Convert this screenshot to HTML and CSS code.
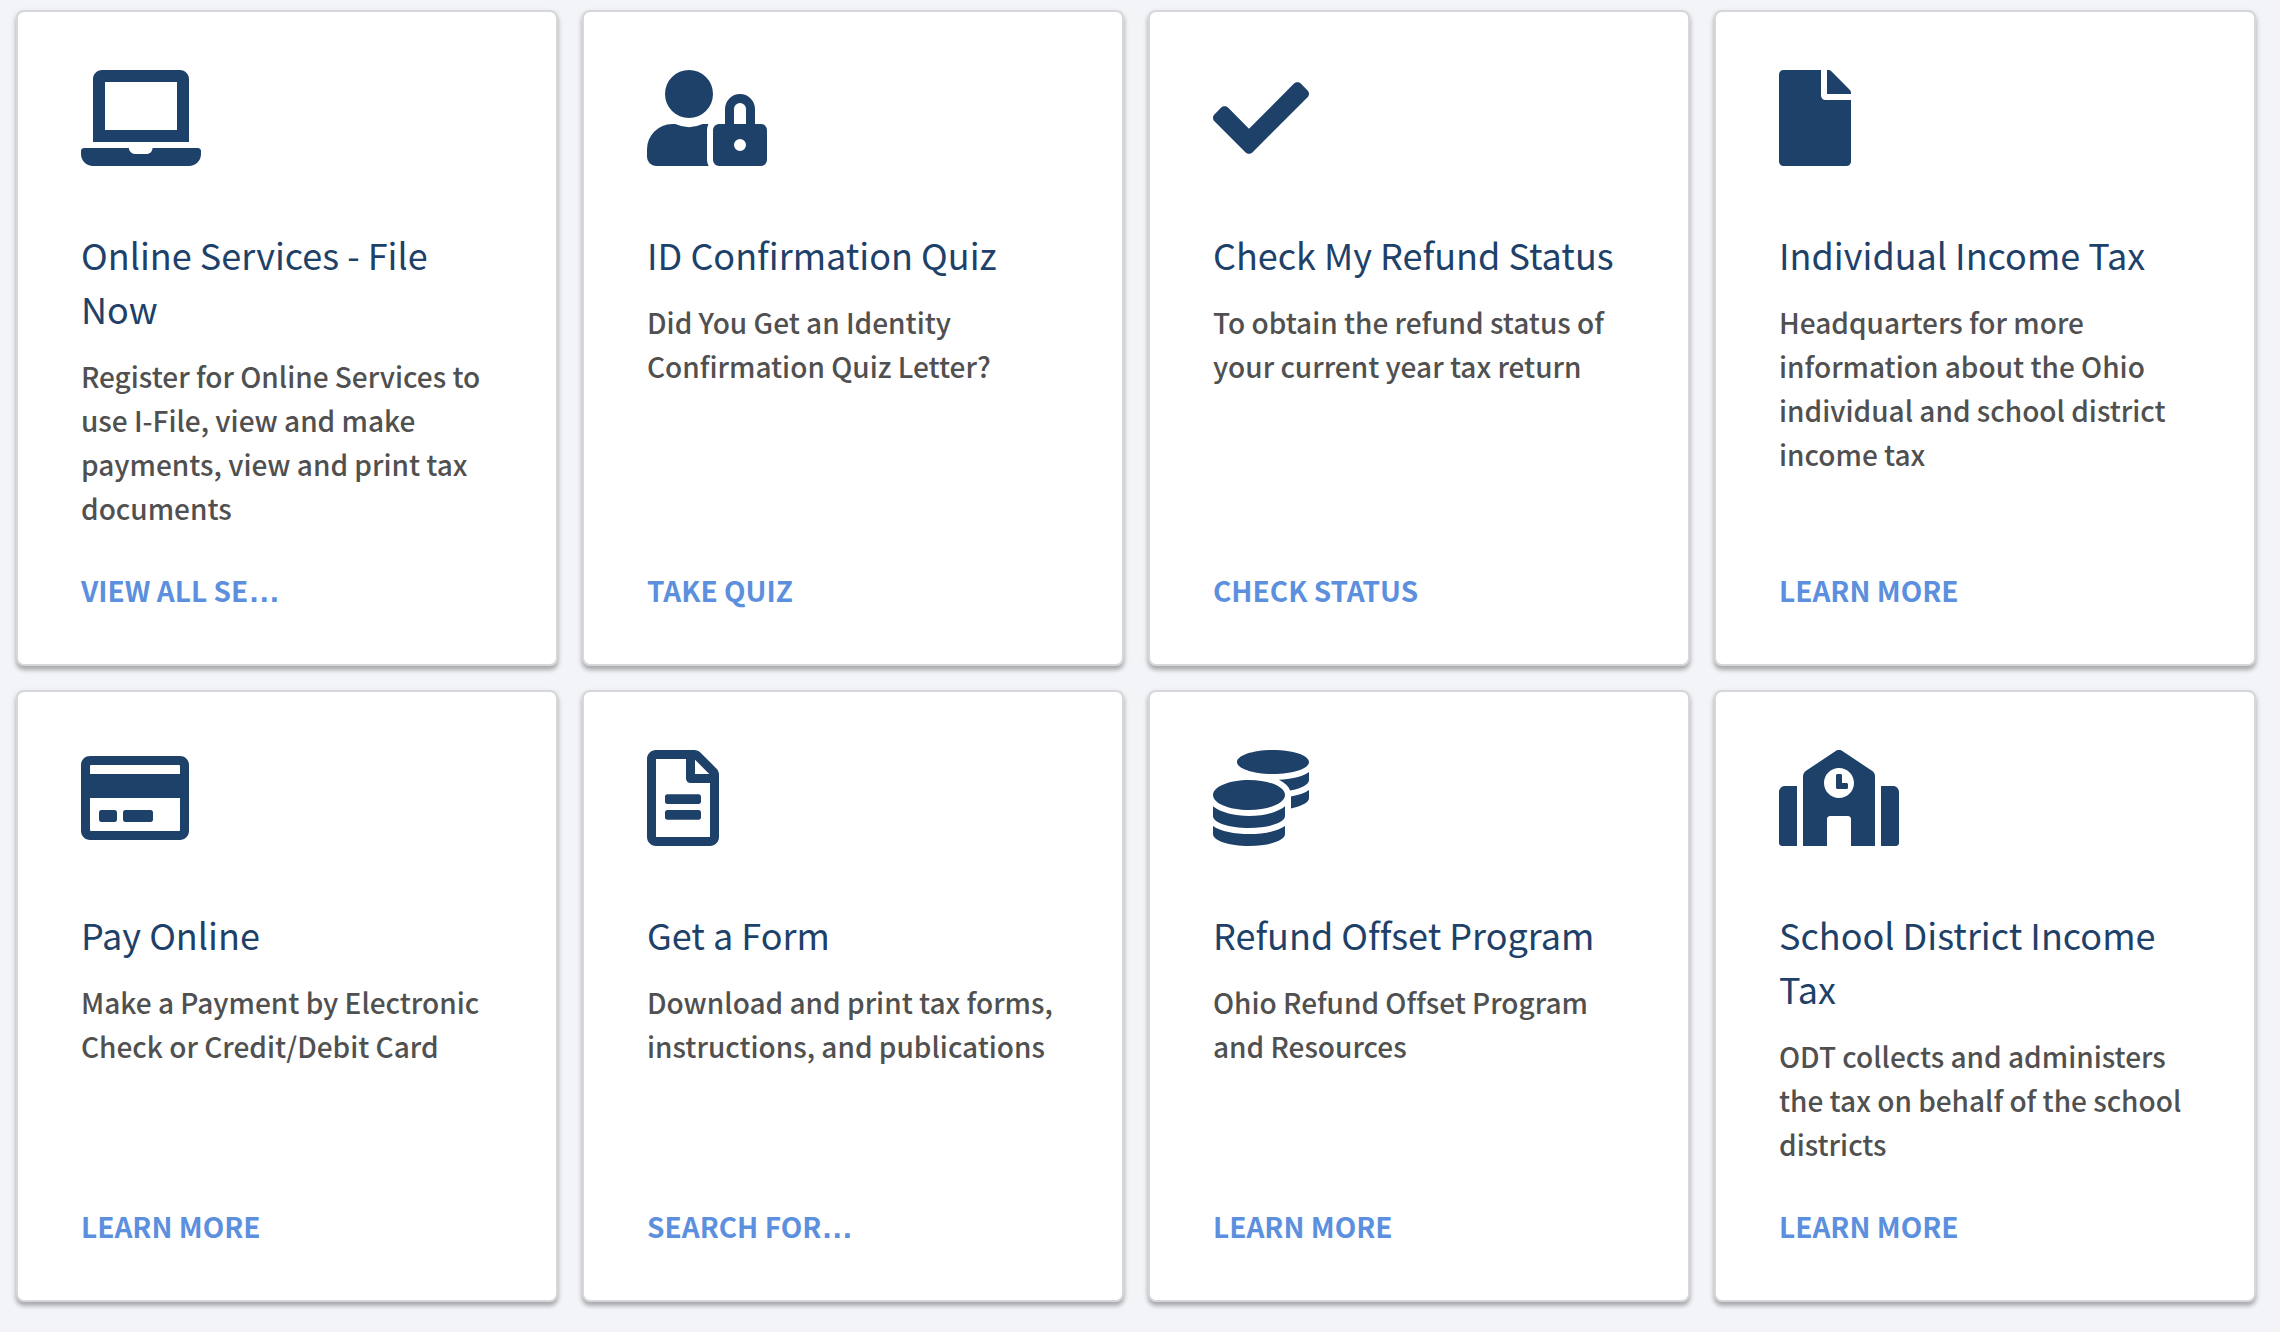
FILE: index.html
```html
<!DOCTYPE html>
<html lang="en">
<head>
    <meta charset="UTF-8">
    <meta name="viewport" content="width=device-width, initial-scale=1.0">
    <title>Department of Taxation</title>
    <link rel="stylesheet" href="styles.css">
</head>
<body>
    <main class="card-grid">
        <!-- First row -->
        <article class="card">
            <svg class="icon" viewBox="0 0 640 512" aria-hidden="true"><path d="M624 416H381.54c-.74 19.81-14.71 32-32.74 32H288c-18.69 0-33.02-17.47-32.77-32H16c-8.8 0-16 7.2-16 16v16c0 35.2 28.8 64 64 64h512c35.2 0 64-28.8 64-64v-16c0-8.8-7.2-16-16-16zM576 48c0-26.4-21.6-48-48-48H112C85.6 0 64 21.6 64 48v336h512V48zm-64 272H128V64h384v256z"/></svg>
            <h2>Online Services - File Now</h2>
            <p>Register for Online Services to use I-File, view and make payments, view and print tax documents</p>
            <a href="#">VIEW ALL SE<span class="dots">…</span></a>
        </article>

        <article class="card">
            <svg class="icon" viewBox="0 0 640 512" aria-hidden="true"><path d="M224 256A128 128 0 1 0 96 128a128 128 0 0 0 128 128zm96 64a63.08 63.08 0 0 1 8.1-30.5c-4.8-.5-9.5-1.5-14.5-1.5h-16.7a174.08 174.08 0 0 1-145.8 0h-16.7A134.43 134.43 0 0 0 0 422.4V464a48 48 0 0 0 48 48h280.9a63.54 63.54 0 0 1-8.9-32zm288-32h-32v-80a80 80 0 0 0-160 0v80h-32a32 32 0 0 0-32 32v160a32 32 0 0 0 32 32h224a32 32 0 0 0 32-32V320a32 32 0 0 0-32-32zM496 432a32 32 0 1 1 32-32 32 32 0 0 1-32 32zm32-144h-64v-80a32 32 0 0 1 64 0z"/></svg>
            <h2>ID Confirmation Quiz</h2>
            <p>Did You Get an Identity Confirmation Quiz Letter?</p>
            <a href="#">TAKE QUIZ</a>
        </article>

        <article class="card">
            <svg class="icon" viewBox="0 0 512 512" aria-hidden="true"><path d="M173.898 439.404l-166.4-166.4c-9.997-9.997-9.997-26.206 0-36.204l36.203-36.204c9.997-9.998 26.207-9.998 36.204 0L192 312.69 432.095 72.596c9.997-9.997 26.207-9.997 36.204 0l36.203 36.204c9.997 9.997 9.997 26.206 0 36.204l-294.4 294.401c-9.998 9.997-26.207 9.997-36.204-.001z"/></svg>
            <h2>Check My Refund Status</h2>
            <p>To obtain the refund status of your current year tax return</p>
            <a href="#">CHECK STATUS</a>
        </article>

        <article class="card">
            <svg class="icon" viewBox="0 0 384 512" aria-hidden="true"><path d="M224 136V0H24C10.7 0 0 10.7 0 24v464c0 13.3 10.7 24 24 24h336c13.3 0 24-10.7 24-24V160H248c-13.2 0-24-10.8-24-24zm160-14.1v6.1H256V0h6.1c6.4 0 12.5 2.5 17 7l97.9 98c4.5 4.5 7 10.6 7 16.9z"/></svg>
            <h2>Individual Income Tax</h2>
            <p>Headquarters for more information about the Ohio individual and school district income tax</p>
            <a href="#">LEARN MORE</a>
        </article>

        <!-- Second row -->
        <article class="card">
            <svg class="icon" viewBox="0 0 576 512" aria-hidden="true"><path d="M527.9 32H48.1C21.5 32 0 53.5 0 80v352c0 26.5 21.5 48 48.1 48h479.8c26.6 0 48.1-21.5 48.1-48V80c0-26.5-21.5-48-48.1-48zM54.1 80h467.8c3.3 0 6 2.7 6 6v42H48.1V86c0-3.3 2.7-6 6-6zm467.8 352H54.1c-3.3 0-6-2.7-6-6V256h479.8v170c0 3.3-2.7 6-6 6zM192 332v40c0 6.6-5.4 12-12 12h-72c-6.6 0-12-5.4-12-12v-40c0-6.6 5.4-12 12-12h72c6.6 0 12 5.4 12 12zm192 0v40c0 6.6-5.4 12-12 12H236c-6.6 0-12-5.4-12-12v-40c0-6.6 5.4-12 12-12h136c6.6 0 12 5.4 12 12z"/></svg>
            <h2>Pay Online</h2>
            <p>Make a Payment by Electronic Check or Credit/Debit Card</p>
            <a href="#">LEARN MORE</a>
        </article>

        <article class="card">
            <svg class="icon" viewBox="0 0 384 512" aria-hidden="true"><path d="M288 248v28c0 6.6-5.4 12-12 12H108c-6.6 0-12-5.4-12-12v-28c0-6.6 5.4-12 12-12h168c6.6 0 12 5.4 12 12zm-12 72H108c-6.6 0-12 5.4-12 12v28c0 6.6 5.4 12 12 12h168c6.6 0 12-5.4 12-12v-28c0-6.6-5.4-12-12-12zm108-188.1V464c0 26.5-21.5 48-48 48H48c-26.5 0-48-21.5-48-48V48C0 21.5 21.5 0 48 0h204.1C264.8 0 277 5.1 286 14.1L369.9 98c9 8.9 14.1 21.2 14.1 33.9zm-128-80V128h76.1L256 51.9zM336 464V176H232c-13.3 0-24-10.7-24-24V48H48v416h288z"/></svg>
            <h2>Get a Form</h2>
            <p>Download and print tax forms, instructions, and publications</p>
            <a href="#">SEARCH FOR<span class="dots">…</span></a>
        </article>

        <article class="card">
            <svg class="icon" viewBox="0 0 512 512" aria-hidden="true"><path d="M0 405.3V448c0 35.3 86 64 192 64s192-28.7 192-64v-42.7C342.7 434.4 267.2 448 192 448S41.3 434.4 0 405.3zM320 128c106 0 192-28.7 192-64S426 0 320 0 128 28.7 128 64s86 64 192 64zM0 300.4V352c0 35.3 86 64 192 64s192-28.7 192-64v-51.6c-41.3 34-116.9 51.6-192 51.6S41.3 334.4 0 300.4zm416 11c57.3-11.1 96-31.7 96-55.4v-42.7c-23.2 16.4-57.3 27.6-96 34.5v63.6zM192 160C86 160 0 195.8 0 240s86 80 192 80 192-35.8 192-80-86-80-192-80zm219.3 56.3c60-10.8 100.7-32 100.7-56.3v-42.7c-35.5 25.1-96.5 38.6-160.7 41.8 29.5 14.3 51.2 33.5 60 57.2z"/></svg>
            <h2>Refund Offset Program</h2>
            <p>Ohio Refund Offset Program and Resources</p>
            <a href="#">LEARN MORE</a>
        </article>

        <article class="card">
            <svg class="icon" viewBox="0 0 640 512" aria-hidden="true"><path d="M0 224v272c0 8.84 7.16 16 16 16h80V192H32c-17.67 0-32 14.33-32 32zm360-48h-24v-40c0-4.42-3.58-8-8-8h-16c-4.42 0-8 3.58-8 8v64c0 4.42 3.58 8 8 8h48c4.42 0 8-3.58 8-8v-16c0-4.42-3.58-8-8-8zm137.75-63.96l-160-106.67a32.02 32.02 0 0 0-35.5 0l-160 106.67A32.002 32.002 0 0 0 128 138.66V512h128V368c0-8.84 7.16-16 16-16h96c8.84 0 16 7.16 16 16v144h128V138.67c0-10.7-5.35-20.69-14.25-26.63zM320 256c-44.18 0-80-35.82-80-80s35.82-80 80-80 80 35.82 80 80-35.82 80-80 80zm288-64h-64v320h80c8.84 0 16-7.16 16-16V224c0-17.67-14.33-32-32-32z"/></svg>
            <h2>School District Income Tax</h2>
            <p>ODT collects and administers the tax on behalf of the school districts</p>
            <a href="#">LEARN MORE</a>
        </article>
    </main>
</body>
</html>
```

FILE: styles.css
```css
* {
    box-sizing: border-box;
}
body {
    font-family: 'Source Sans Pro', 'Noto Sans CJK SC', sans-serif;
    font-variant-ligatures: none;
    margin: 0;
    background-color: #f3f4f8;
    color: #505050;
}
.card-grid {
    display: grid;
    grid-template-columns: repeat(4, 1fr);
    gap: 24px;
    padding: 10px 24px 30px 16px;
}
.card {
    display: flex;
    flex-direction: column;
    align-items: flex-start;
    padding: 58px 63px 52px;
    background-color: #fff;
    border: 2px solid #d6d7d8;
    border-radius: 8px;
    box-shadow: 0 4px 4px rgba(0, 0, 0, 0.25), 0 2px 6px rgba(0, 0, 0, 0.1);
}
.icon {
    height: 96px;
    margin-bottom: 61px;
    fill: #1e4169;
}
.card h2 {
    margin: 0 0 19px;
    color: #1e4169;
    font-size: 36px;
    font-weight: 400;
    line-height: 54px;
}
.card p {
    margin: 0 0 38px;
    font-size: 28px;
    font-weight: 500;
    line-height: 44px;
}
.card a {
    margin-top: auto; /* keeps links lined up across a row */
    color: #5c8fdd;
    font-size: 28px;
    font-weight: 700;
    line-height: 44px;
    text-decoration: none;
}
.card a:hover {
    text-decoration: underline;
}
.dots {
    font-family: 'Liberation Sans', sans-serif;
    font-size: 32px;
    line-height: 1;
}
```
